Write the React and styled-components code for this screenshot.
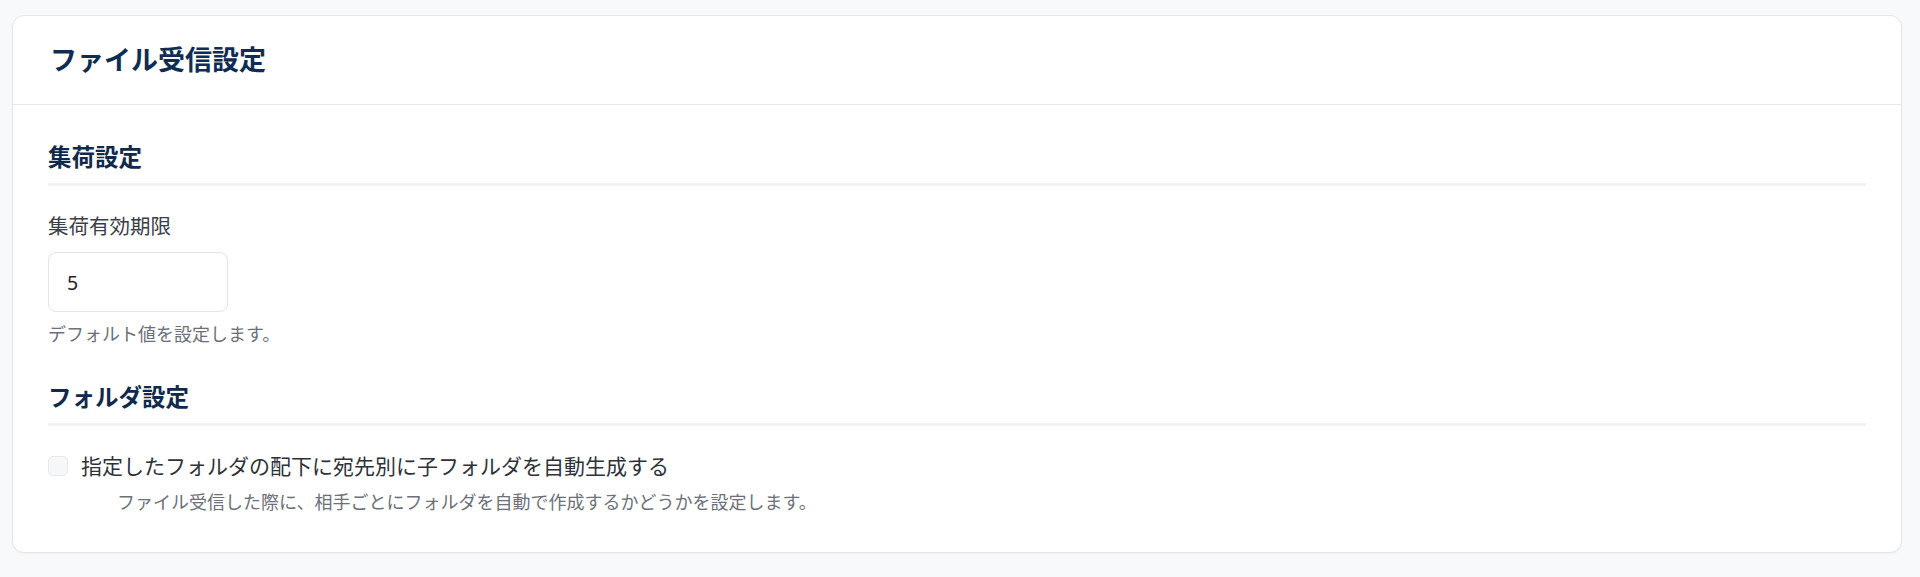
import React, { useState } from 'react';
import styled, { createGlobalStyle } from 'styled-components';

const GlobalStyle = createGlobalStyle`
  body {
    margin: 0;
    background-color: #f8f9fb;
    font-family: "Noto Sans", "Noto Sans CJK JP", sans-serif;
  }
`;

const StyledPage = styled.div`
  padding: 15px 18px 24px 12px;
`;

const StyledCard = styled.section`
  background-color: #ffffff;
  border: 1px solid #e4e6ea;
  border-radius: 12px;
  box-shadow: 0 1px 2px rgba(16, 24, 40, 0.04);
`;

const StyledHeader = styled.header`
  align-items: center;
  border-bottom: 1px solid #e4e6ea;
  display: flex;
  height: 88px;
  padding: 0 37px;
`;

const StyledTitle = styled.h1`
  color: #0f2d54;
  font-size: 27px;
  font-weight: 700;
  line-height: 34px;
  margin: 0;
`;

const StyledBody = styled.div`
  padding: 37px 35px 38px;
`;

const StyledSectionTitle = styled.h2`
  border-bottom: 3px solid #f1f2f4;
  color: #102a4c;
  font-size: 23.5px;
  font-weight: 700;
  line-height: 30px;
  margin: ${({ first }) => (first ? '0' : '36px 0 0')};
  padding-bottom: 11px;
`;

const StyledLabel = styled.label`
  color: #3b4048;
  display: block;
  font-size: 20.5px;
  line-height: 28px;
  margin-top: 26px;
`;

const StyledInput = styled.input`
  border: 1px solid #e3e5e9;
  border-radius: 8px;
  box-sizing: border-box;
  color: #1f2329;
  display: block;
  font-family: "Noto Sans", "Noto Sans CJK JP", sans-serif;
  font-size: 19.5px;
  height: 60px;
  margin-top: 12px;
  outline: none;
  padding: 0 18px;
  width: 180px;
`;

const StyledHelp = styled.p`
  color: #6b7079;
  font-size: 18px;
  line-height: 24px;
  margin: 10px 0 0;
  padding-left: ${({ indent }) => indent || 0}px;
`;

const StyledCheckRow = styled.label`
  align-items: center;
  color: #2e3238;
  display: flex;
  font-size: 21px;
  gap: 13px;
  line-height: 28px;
  margin-top: 26px;
`;

const StyledCheckbox = styled.span`
  background-color: #f6f7f9;
  border: 1px solid #e6e8ec;
  border-radius: 5px;
  box-sizing: border-box;
  display: inline-block;
  flex-shrink: 0;
  height: 20px;
  width: 20px;
`;

const App = () => {
  const [days, setDays] = useState('5');

  return (
    <StyledPage>
      <GlobalStyle />
      <StyledCard>
        <StyledHeader>
          <StyledTitle>ファイル受信設定</StyledTitle>
        </StyledHeader>

        <StyledBody>
          <StyledSectionTitle first>集荷設定</StyledSectionTitle>
          <StyledLabel htmlFor="expire-days">集荷有効期限</StyledLabel>
          <StyledInput
            id="expire-days"
            onChange={(e) => setDays(e.target.value)}
            value={days}
          />
          <StyledHelp>デフォルト値を設定します。</StyledHelp>

          <StyledSectionTitle>フォルダ設定</StyledSectionTitle>
          <StyledCheckRow>
            <StyledCheckbox />
            指定したフォルダの配下に宛先別に子フォルダを自動生成する
          </StyledCheckRow>
          <StyledHelp indent={69}>
            ファイル受信した際に、相手ごとにフォルダを自動で作成するかどうかを設定します。
          </StyledHelp>
        </StyledBody>
      </StyledCard>
    </StyledPage>
  );
};

export default App;
